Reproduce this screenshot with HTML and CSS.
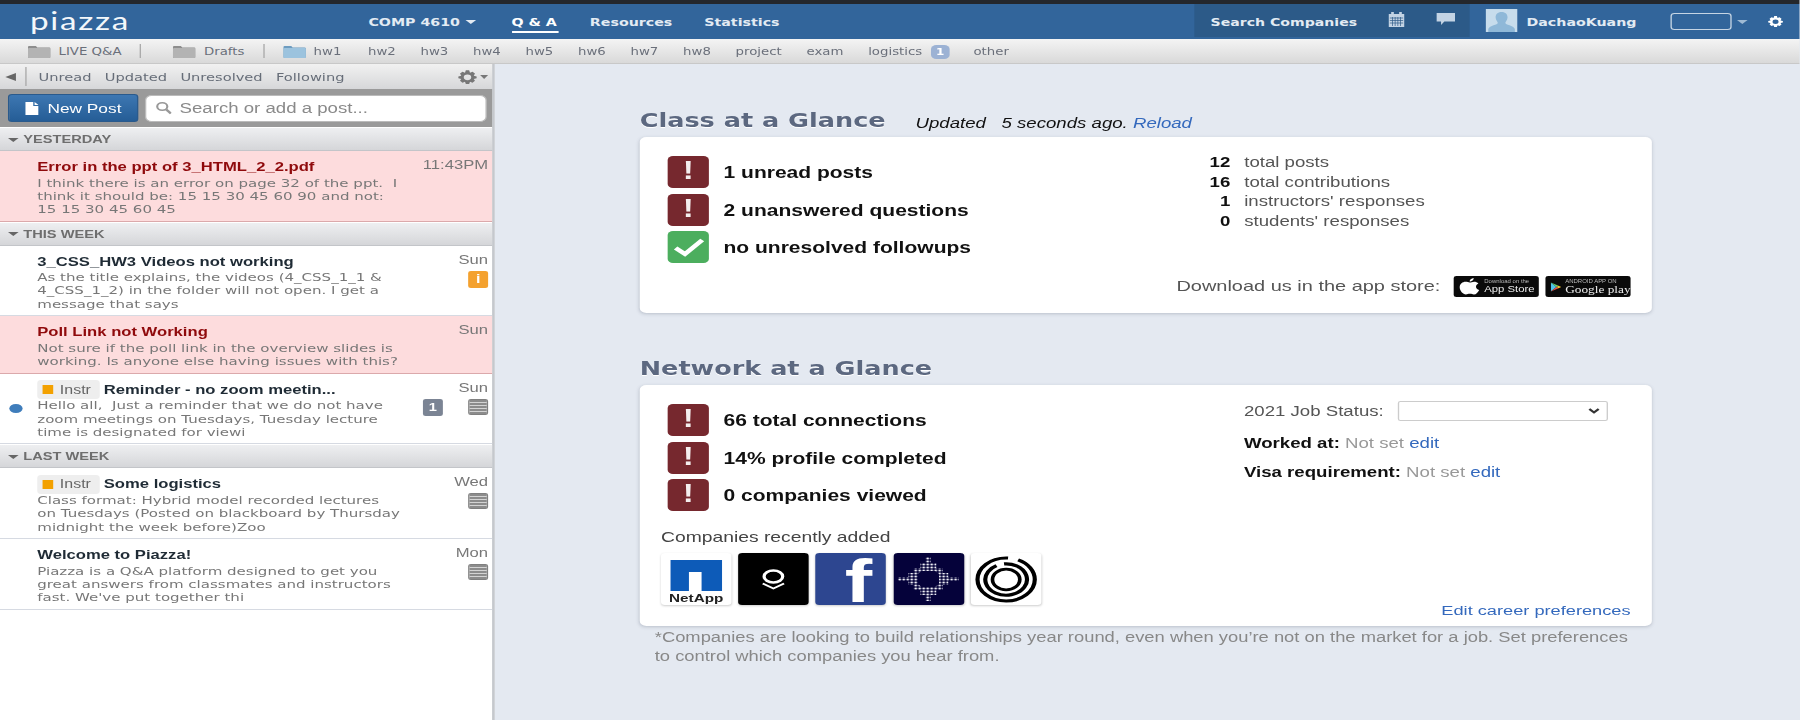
FILE: index.html
```html
<!DOCTYPE html>
<html lang="en">
<head>
    <meta charset="UTF-8">
    <title>Piazza - COMP 4610</title>
    <link rel="stylesheet" href="styles.css">
</head>
<body>
<div class="page">
    <div class="topline"></div>

    <header class="header">
        <div class="logo">piazza</div>
        <nav class="nav">
            <a class="course">COMP 4610<span class="caret"></span></a>
            <a class="active">Q &amp; A</a>
            <a class="res">Resources</a>
            <a class="stat">Statistics</a>
        </nav>
        <div class="header-right">
            <div class="search-co">
                <span>Search Companies</span>
                <svg class="cal" width="12" height="15" viewBox="0 0 12 15"><path fill="#c3d3e4" d="M0 2h2V0h2v2h4V0h2v2h2v13H0z"/><path stroke="#2c5a88" stroke-width=".6" d="M1 6h10M1 8.500h10M1 11h10M3 5v9M5 5v9M7 5v9M9 5v9"/></svg>
                <svg class="chat" width="14" height="12" viewBox="0 0 14 12"><path fill="#c3d3e4" d="M0 0h14v8.500H6L3.500 12V8.500H0z"/></svg>
            </div>
            <svg class="avatar" width="24" height="23" viewBox="0 0 24 23"><rect width="24" height="23" fill="#c7dcec"/><path fill="#8fb8d8" d="M12 3c3 0 4.500 2.400 4.500 5.200S14.800 13 14.800 14c0 1.600 6.200 2.600 7.200 6v3H2v-3c1-3.400 7.200-4.400 7.200-6 0-1-1.700-3-1.700-5.800S9 3 12 3z"/></svg>
            <span class="username">DachaoKuang</span>
            <span class="emptybox"></span>
            <span class="caret dim"></span>
            <svg class="cog" width="12" height="15" viewBox="0 0 24 24"><path fill="#fff" fill-rule="evenodd" d="M10 1h4l1 4 3-1.500 3 3L19.500 10l3.500 1v3l-3.500 1L21 18l-3 3-3-1.500-1 3.500h-4l-1-3.500L6 21l-3-3 1.500-3L1 14v-3l3.500-1L3 6.500l3-3L9 5zM12 8a4.500 4.500 0 1 0 0 9 4.500 4.500 0 0 0 0-9z"/></svg>
        </div>
    </header>

    <div class="subnav">
        <svg class="folder" width="17" height="14" viewBox="0 0 17 14"><path fill="#8d8d8d" d="M1 2h5l1 1.500h9a1 1 0 0 1 1 1V13a1 1 0 0 1-1 1H1a1 1 0 0 1-1-1V3a1 1 0 0 1 1-1z"/><rect y="4" width="17" height="10" rx="1" fill="#b3b3b3"/></svg>
        <span class="fname">LIVE Q&amp;A</span>
        <span class="divider"></span>
        <svg class="folder gap-a" width="17" height="14" viewBox="0 0 17 14"><path fill="#8d8d8d" d="M1 2h5l1 1.500h9a1 1 0 0 1 1 1V13a1 1 0 0 1-1 1H1a1 1 0 0 1-1-1V3a1 1 0 0 1 1-1z"/><rect y="4" width="17" height="10" rx="1" fill="#b3b3b3"/></svg>
        <span class="fname">Drafts</span>
        <span class="divider"></span>
        <svg class="folder gap-b" width="17" height="14" viewBox="0 0 17 14"><path fill="#6d9cc0" d="M1 2h5l1 1.500h9a1 1 0 0 1 1 1V13a1 1 0 0 1-1 1H1a1 1 0 0 1-1-1V3a1 1 0 0 1 1-1z"/><rect y="4" width="17" height="10" rx="1" fill="#9cc3de"/></svg>
        <span class="fname">hw1</span>
        <span class="tab first">hw2</span>
        <span class="tab">hw3</span>
        <span class="tab">hw4</span>
        <span class="tab">hw5</span>
        <span class="tab">hw6</span>
        <span class="tab">hw7</span>
        <span class="tab">hw8</span>
        <span class="tab">project</span>
        <span class="tab">exam</span>
        <span class="tab">logistics</span>
        <span class="tab-count">1</span>
        <span class="tab">other</span>
    </div>

    <div class="content">
        <aside class="sidebar">
            <div class="filters">
                <span class="arrow-left"></span>
                <span class="filter-sep"></span>
                <span class="filter first">Unread</span>
                <span class="filter">Updated</span>
                <span class="filter">Unresolved</span>
                <span class="filter">Following</span>
                <svg class="filter-gear" width="15" height="16" viewBox="0 0 24 24"><path fill="#777" fill-rule="evenodd" d="M10 1h4l1 4 3-1.500 3 3L19.500 10l3.500 1v3l-3.500 1L21 18l-3 3-3-1.500-1 3.500h-4l-1-3.500L6 21l-3-3 1.500-3L1 14v-3l3.500-1L3 6.500l3-3L9 5zM12 8a4.500 4.500 0 1 0 0 9 4.500 4.500 0 0 0 0-9z"/></svg>
                <span class="caret grey"></span>
            </div>

            <div class="searchband">
                <button class="btn-new">
                    <svg width="10" height="13" viewBox="0 0 10 13"><path fill="#fff" d="M0 0h6v4h4v9H0zM7 0l3 3H7z"/></svg>
                    New Post
                </button>
                <div class="post-search">
                    <svg width="12" height="14" viewBox="0 0 12 14"><circle cx="5" cy="5.500" r="3.800" fill="none" stroke="#999" stroke-width="1.600"/><path d="M8 8.500l3.500 4" stroke="#999" stroke-width="2"/></svg>
                    <span>Search or add a post...</span>
                </div>
            </div>

            <div class="section"><span class="tri"></span>YESTERDAY</div>
            <div class="post pink">
                <div class="gutter"></div>
                <div class="post-body">
                    <div class="post-title">Error in the ppt of 3_HTML_2_2.pdf</div>
                    <div class="post-text">I think there is an error on page 32 of the ppt.&nbsp; I<br>think it should be: 15 15 30 45 60 90 and not:<br>15 15 30 45 60 45</div>
                </div>
                <div class="post-meta"><span class="post-time">11:43PM</span></div>
            </div>

            <div class="section"><span class="tri"></span>THIS WEEK</div>
            <div class="post">
                <div class="gutter"></div>
                <div class="post-body">
                    <div class="post-title">3_CSS_HW3 Videos not working</div>
                    <div class="post-text">As the title explains, the videos (4_CSS_1_1 &amp;<br>4_CSS_1_2) in the folder will not open. I get a<br>message that says</div>
                </div>
                <div class="post-meta">
                    <span class="post-time">Sun</span>
                    <div class="meta-icons"><span class="info">i</span></div>
                </div>
            </div>
            <div class="post pink">
                <div class="gutter"></div>
                <div class="post-body">
                    <div class="post-title">Poll Link not Working</div>
                    <div class="post-text">Not sure if the poll link in the overview slides is<br>working. Is anyone else having issues with this?</div>
                </div>
                <div class="post-meta"><span class="post-time">Sun</span></div>
            </div>
            <div class="post">
                <div class="gutter"><span class="unread-dot"></span></div>
                <div class="post-body">
                    <div class="post-title"><span class="instr"><i></i>Instr</span>Reminder - no zoom meetin...</div>
                    <div class="post-text">Hello all,&nbsp; Just a reminder that we do not have<br>zoom meetings on Tuesdays, Tuesday lecture<br>time is designated for viewi</div>
                </div>
                <div class="post-meta">
                    <span class="post-time">Sun</span>
                    <div class="meta-icons">
                        <span class="count">1</span>
                        <span class="note"></span>
                    </div>
                </div>
            </div>

            <div class="section"><span class="tri"></span>LAST WEEK</div>
            <div class="post">
                <div class="gutter"></div>
                <div class="post-body">
                    <div class="post-title"><span class="instr"><i></i>Instr</span>Some logistics</div>
                    <div class="post-text">Class format: Hybrid model recorded lectures<br>on Tuesdays (Posted on blackboard by Thursday<br>midnight the week before)Zoo</div>
                </div>
                <div class="post-meta">
                    <span class="post-time">Wed</span>
                    <div class="meta-icons"><span class="note"></span></div>
                </div>
            </div>
            <div class="post">
                <div class="gutter"></div>
                <div class="post-body">
                    <div class="post-title">Welcome to Piazza!</div>
                    <div class="post-text">Piazza is a Q&amp;A platform designed to get you<br>great answers from classmates and instructors<br>fast. We've put together thi</div>
                </div>
                <div class="post-meta">
                    <span class="post-time">Mon</span>
                    <div class="meta-icons"><span class="note"></span></div>
                </div>
            </div>
        </aside>

        <main class="main">
            <div class="glance-head">
                <h2>Class at a Glance</h2>
                <span class="updated">Updated &nbsp;&nbsp;5 seconds ago. <a class="link">Reload</a></span>
            </div>
            <section class="card">
                <div class="card-cols">
                    <div class="checks">
                        <div class="check"><span class="alert">!</span>1 unread posts</div>
                        <div class="check"><span class="alert">!</span>2 unanswered questions</div>
                        <div class="check">
                            <span class="alert ok"><svg width="24" height="20" viewBox="0 0 24 20"><path d="M2 11l7 6L22 3" fill="none" stroke="#fff" stroke-width="4"/></svg></span>
                            no unresolved followups
                        </div>
                    </div>
                    <div class="stats">
                        <div><b>12</b>total posts</div>
                        <div><b>16</b>total contributions</div>
                        <div><b>1</b>instructors' responses</div>
                        <div><b>0</b>students' responses</div>
                    </div>
                </div>
                <div class="download">
                    <span>Download us in the app store:</span>
                    <div class="store">
                        <svg width="16" height="17" viewBox="0 0 16 17"><path fill="#fff" d="M11 0c.2 1.800-1.400 3.600-3 3.500C7.800 1.800 9.400.2 11 0zM8 4.500c1 0 2-.8 3.400-.8 1.200 0 2.400.6 3.200 1.700-2.700 1.600-2.300 5.400.6 6.500-.8 2-2.300 4.600-4 4.600-1.200 0-1.600-.7-3-.7s-1.900.7-3 .7C3 16.500.5 12.500.5 9.200c0-3.300 2.200-5.400 4.400-5.400 1.300 0 2.300.7 3.100.7z"/></svg>
                        <div class="store-text"><small>Download on the</small><span>App Store</span></div>
                    </div>
                    <div class="store">
                        <svg width="12" height="14" viewBox="0 0 12 14"><path fill="#4fc3e8" d="M0 0l6.500 7L0 14z"/><path fill="#63c96a" d="M0 0l9 5-2.500 2z"/><path fill="#e8524a" d="M0 14l9-5-2.500-2z"/><path fill="#f7c531" d="M9 5l3 2-3 2-2.500-2z"/></svg>
                        <div class="store-text google"><small>ANDROID APP ON</small><span>Google play</span></div>
                    </div>
                </div>
            </section>

            <div class="glance-head second">
                <h2>Network at a Glance</h2>
            </div>
            <section class="card network">
                <div class="net-left">
                    <div class="checks">
                        <div class="check"><span class="alert">!</span>66 total connections</div>
                        <div class="check"><span class="alert">!</span>14% profile completed</div>
                        <div class="check"><span class="alert">!</span>0 companies viewed</div>
                    </div>
                    <div class="recent-label">Companies recently added</div>
                    <div class="logos">
                        <div class="co netapp">
                            <svg width="39" height="31" viewBox="0 0 39 31"><path fill="#0d5bb8" d="M0 0h39v31H23.500V12H14v19H0z"/></svg>
                            <span>NetApp</span>
                        </div>
                        <div class="co black">
                            <svg width="19" height="21" viewBox="0 0 19 21"><ellipse cx="9.500" cy="7.500" rx="7" ry="6" fill="none" stroke="#fff" stroke-width="2.400"/><path d="M1.500 14.500l8 5 8-5" fill="none" stroke="#fff" stroke-width="1.800"/></svg>
                        </div>
                        <div class="co fb"><span>f</span></div>
                        <div class="co navy">
                            <svg width="46" height="44" viewBox="0 0 46 44">
                                <defs><pattern id="dots" width="3" height="3" patternUnits="userSpaceOnUse"><circle cx="1.500" cy="1.500" r="1.050" fill="#f0f1f8"/></pattern></defs>
                                <path fill="url(#dots)" fill-rule="evenodd" d="M21 0h4v6h4v5h5v5h4v4h8v4h-8v4h-4v5h-5v5h-4v6h-4v-6h-4v-5h-5v-5H8v-4H0v-4h8v-4h4v-5h5V6h4zM18 14l-3 3v10l3 3h10l3-3V17l-3-3z"/>
                            </svg>
                        </div>
                        <div class="co rings">
                            <svg width="47" height="47" viewBox="0 0 48 48" fill="none" stroke="#000" stroke-width="3.200">
                                <circle cx="24" cy="24" r="22" stroke-dasharray="105 8 25 0"/>
                                <circle cx="24" cy="24" r="16" stroke-dasharray="34 6 60 0" transform="rotate(120 24 24)"/>
                                <circle cx="24" cy="24" r="10.500" stroke-width="2.800"/>
                            </svg>
                        </div>
                    </div>
                </div>
                <div class="net-right">
                    <div class="job-status">
                        <span>2021 Job Status:</span>
                        <div class="fake-select">
                            <svg width="9" height="6" viewBox="0 0 9 6"><path d="M1 1l3.500 3.500L8 1" fill="none" stroke="#333" stroke-width="1.800"/></svg>
                        </div>
                    </div>
                    <div class="net-line"><b>Worked at:</b> <span class="notset">Not set</span> <a class="link">edit</a></div>
                    <div class="net-line"><b>Visa requirement:</b> <span class="notset">Not set</span> <a class="link">edit</a></div>
                    <a class="link edit-career">Edit career preferences</a>
                </div>
            </section>
            <p class="footnote">*Companies are looking to build relationships year round, even when you’re not on the market for a job. Set preferences<br>to control which companies you hear from.</p>
        </main>
    </div>
</div>
</body>
</html>
```

FILE: styles.css
```css
html, body {
    margin: 0;
    height: 100%;
    overflow: hidden;
    background: #e4e9f1;
}
/* the whole screen is wider than it is tall in the original capture */
.page {
    width: 1353.4px;
    height: 720px;
    transform: scaleX(1.33);
    transform-origin: 0 0;
    font-family: "Liberation Sans", Arial, sans-serif;
    display: flex;
    flex-direction: column;
}
.topline {
    height: 4px;
    background: #24272c;
}

/* header */
.header {
    height: 35px;
    background: #32659b;
    display: flex;
    align-items: center;
    color: #e3ebf3;
    font-family: "DejaVu Sans", sans-serif;
    font-weight: bold;
    font-size: 10.700px;
    flex: none;
}
.logo {
    width: 254.500px;
    padding-left: 22.500px;
    font-family: "Lato", sans-serif;
    font-size: 25px;
    font-weight: 400;
    letter-spacing: 1.300px;
    color: #f4f7fa;
    line-height: 30px;
    margin-top: -4px;
}
.nav {
    display: flex;
    align-items: center;
    margin-top: 1px;
}
.nav a {
    display: block;
}
.course {
    width: 107.500px;
}
.active {
    color: #fff;
    border-bottom: 2px solid #fff;
    padding-bottom: 2px;
    margin-top: 4px;
    width: 35px;
    white-space: nowrap;
}
.res {
    margin-left: 24px;
    width: 61px;
}
.stat {
    margin-left: 25px;
}
.caret {
    display: inline-block;
    margin-left: 4px;
    vertical-align: 2px;
    border-left: 4px solid transparent;
    border-right: 4px solid transparent;
    border-top: 4px solid #e3ebf3;
}
.caret.dim {
    border-top-color: #9fbad4;
    margin-left: 4px;
}
.caret.grey {
    border-top-color: #777;
    border-left-width: 3px;
    border-right-width: 3px;
    margin-left: 2px;
    vertical-align: 0;
}
.header-right {
    margin-left: auto;
    display: flex;
    align-items: center;
    height: 100%;
}
.search-co {
    width: 207px;
    box-sizing: border-box;
    height: 33px;
    margin-bottom: 2px;
    background: #2c5a88;
    padding-left: 12.500px;
    display: flex;
    align-items: center;
}
.search-co span {
    width: 134px;
    margin-top: 2px;
    font-size: 10.600px;
}
.cal {
    margin-top: -3px;
}
.chat {
    margin-left: 24px;
    margin-top: -4px;
}
.avatar {
    margin-left: 12px;
    margin-bottom: 3px;
}
.username {
    margin-left: 7px;
    margin-top: 1px;
    width: 108.700px;
}
.emptybox {
    width: 44px;
    height: 15px;
    border: 1px solid #c6d5e4;
    border-radius: 3px;
}
.cog {
    margin-left: 15px;
    margin-right: 12px;
}

/* folder bar */
.subnav {
    height: 24px;
    border-bottom: 1px solid #c8c8c8;
    background: linear-gradient(#f4f4f4, #d9d9d9);
    display: flex;
    align-items: center;
    padding-left: 21px;
    font-family: "DejaVu Sans", sans-serif;
    font-size: 10px;
    color: #6a6f7a;
    flex: none;
}
.subnav span:not(.divider) {
    margin-top: 1px;
}
.fname {
    margin-left: 6px;
}
.divider {
    width: 1px;
    height: 14px;
    background: #aaa;
    margin-left: 14px;
}
.gap-a {
    margin-left: 24px;
}
.gap-b {
    margin-left: 14px;
}
.tab {
    margin-left: 18.600px;
}
.tab.first {
    margin-left: 20px;
}
.tab-count {
    margin-left: 6.500px;
    margin-right: -13px;
    width: 14px;
    height: 14px;
    border-radius: 4px;
    background: #9cb2d4;
    color: #fff;
    font-weight: bold;
    font-size: 9px;
    text-align: center;
    line-height: 14px;
}
.tab-count + .tab {
    margin-left: 31px;
}

.content {
    flex: 1;
    display: flex;
    min-height: 0;
}

/* left list */
.sidebar {
    width: 370px;
    border-right: 2px solid #c5c8cd;
    background: #fff;
    flex: none;
}
.filters {
    height: 25px;
    background: linear-gradient(#f1f1f1, #d6d7d9);
    display: flex;
    align-items: center;
    font-family: "DejaVu Sans", sans-serif;
    font-size: 11px;
    color: #666d78;
}
.filter {
    margin-left: 10px;
    padding-top: 2px;
}
.filter.first {
    margin-left: 9px;
}
.arrow-left {
    margin-left: 4px;
    border-top: 4.500px solid transparent;
    border-bottom: 4.500px solid transparent;
    border-right: 8px solid #666;
}
.filter-sep {
    width: 1px;
    height: 19px;
    background: #aaa;
    margin-left: 7px;
}
.filter-gear {
    margin-left: auto;
}
.filters .caret {
    margin-right: 3px;
}
.searchband {
    height: 38px;
    background: #9a9a9a;
    display: flex;
    align-items: center;
    padding-left: 6px;
}
.btn-new {
    width: 98px;
    height: 28px;
    border: 1px solid #2a5a8c;
    border-radius: 3px;
    background: linear-gradient(#3d77b2, #255d96);
    color: #fff;
    font-family: "Liberation Sans", sans-serif;
    font-size: 13px;
    display: flex;
    align-items: center;
    justify-content: center;
    gap: 7px;
    padding: 0;
}
.post-search {
    width: 257px;
    height: 27px;
    box-sizing: border-box;
    margin-left: 5px;
    border-radius: 5px;
    border: 1px solid #bbb;
    background: #fff;
    display: flex;
    align-items: center;
    gap: 6px;
    padding-left: 7px;
    font-size: 14px;
    color: #8a8a8a;
}
.section {
    height: 23px;
    margin-top: 1px;
    border-bottom: 1px solid #c3c5c9;
    box-sizing: border-box;
    background: linear-gradient(#eeeff1, #d5d6d9);
    display: flex;
    align-items: center;
    font-size: 11px;
    font-weight: bold;
    color: #6e6e6e;
    padding-left: 5.500px;
}
.tri {
    border-left: 4px solid transparent;
    border-right: 4px solid transparent;
    border-top: 4px solid #666;
    margin-right: 4px;
    margin-top: 1px;
}
.post {
    display: flex;
    padding: 8px 3px 4.300px 0;
    border-bottom: 1px solid #d6dae2;
}
.post.pink {
    background: #fddcdd;
    border-bottom-color: #dba9ab;
}
.gutter {
    width: 28px;
    flex: none;
}
.unread-dot {
    display: block;
    width: 10px;
    height: 9px;
    border-radius: 50%;
    background: #3f7dbb;
    margin: 22px 0 0 7px;
}
.post-body {
    flex: 1;
    white-space: nowrap;
}
.post-title {
    height: 16px;
    line-height: 16px;
    font-size: 12.500px;
    font-weight: bold;
    color: #1f2b35;
    display: flex;
    align-items: center;
}
.pink .post-title {
    color: #8f0a0c;
}
.post-text {
    margin-top: 1.500px;
    font-family: "DejaVu Sans", sans-serif;
    font-size: 11.300px;
    line-height: 13.300px;
    color: #777;
}
.instr {
    display: inline-flex;
    align-items: center;
    height: 19px;
    width: 47px;
    box-sizing: border-box;
    flex: none;
    background: #eeeeee;
    border-radius: 3px;
    padding-left: 4px;
    margin-right: 3px;
    font-size: 12px;
    font-weight: normal;
    color: #666;
}
.instr i {
    width: 8px;
    height: 9px;
    background: #f3a100;
    margin-right: 5px;
}
.post-meta {
    display: flex;
    flex-direction: column;
    align-items: flex-end;
    margin-top: -1px;
}
.post-time {
    font-size: 12.500px;
    line-height: 14px;
    color: #777;
}
.meta-icons {
    display: flex;
    gap: 19px;
    margin-top: 4px;
}
.info, .count {
    width: 15px;
    height: 17px;
    border-radius: 2px;
    color: #fff;
    font-weight: bold;
    text-align: center;
    line-height: 17px;
    font-size: 12px;
}
.info {
    background: #f4a12e;
}
.count {
    background: #7b8494;
    font-size: 11px;
}
.note {
    width: 15px;
    height: 16px;
    box-sizing: border-box;
    border-radius: 2px;
    background: repeating-linear-gradient(#8c8c8c 0 2px, #d4d4d4 2px 3px);
    border: 1px solid #808080;
}

/* right side */
.main {
    flex: 1;
    padding: 44px 0 0 109px;
}
.glance-head {
    height: 29px;
    width: 761px;
    display: flex;
    align-items: center;
}
.glance-head.second {
    margin-top: 43px;
}
.glance-head h2 {
    margin: -5px 0 0;
    font-family: "DejaVu Sans", sans-serif;
    font-size: 19.200px;
    color: #5c6880;
    text-shadow: 0 1px 0 #fff;
}
.updated {
    margin-left: 22.500px;
    font-size: 14px;
    font-style: italic;
    color: #111;
}
.link {
    color: #3469bd;
}
.card {
    width: 761px;
    box-sizing: border-box;
    background: #fff;
    border-radius: 5px;
    box-shadow: 0 1px 3px rgba(90, 100, 120, .3);
    padding: 15px 16px 16px;
}
.card-cols {
    display: flex;
    justify-content: space-between;
}
.checks {
    margin: 4px 0 0 5px;
    display: flex;
    flex-direction: column;
    gap: 5.500px;
}
.check {
    display: flex;
    align-items: flex-start;
    height: 32px;
    line-height: 33px;
    font-size: 15.800px;
    font-weight: bold;
    color: #111;
}
.alert {
    width: 31px;
    height: 32px;
    border-radius: 4px;
    background: #76282e;
    color: #f4eeee;
    font-size: 25px;
    font-weight: bold;
    line-height: 28px;
    margin-right: 11px;
    display: flex;
    align-items: flex-start;
    justify-content: center;
}
.alert.ok {
    background: #4cae5e;
    align-items: center;
}
.stats {
    width: 328px;
    padding-top: 1px;
    font-size: 14px;
    line-height: 19.700px;
    color: #555;
}
.stats b {
    display: inline-block;
    width: 27px;
    margin-right: 10.500px;
    text-align: right;
    color: #111;
}
.download {
    display: flex;
    justify-content: flex-end;
    align-items: center;
    margin-top: 13px;
    gap: 5px;
    font-size: 15px;
    color: #555;
}
.download > span {
    margin: 0 5px 3px 0;
}
.store {
    width: 64px;
    height: 21px;
    border-radius: 2px;
    background: #0a0a0a;
    color: #eee;
    display: flex;
    align-items: center;
    gap: 3px;
    padding-left: 4px;
    box-sizing: border-box;
}
.store-text {
    display: flex;
    flex-direction: column;
    font-size: 8.500px;
    line-height: 9px;
    white-space: nowrap;
}
.store-text small {
    font-size: 4.500px;
    line-height: 6px;
    color: #bbb;
}
.store-text.google {
    font-family: "Liberation Serif", serif;
    font-size: 10px;
}
.store-text.google small {
    font-family: "Liberation Sans", sans-serif;
}
.network {
    display: flex;
    justify-content: space-between;
    height: 241px;
    padding-bottom: 7px;
}
.recent-label {
    margin-top: 17px;
    font-size: 14.500px;
    line-height: 18px;
    color: #444;
}
.logos {
    display: flex;
    gap: 5.200px;
    margin-top: 7px;
}
.co {
    width: 53px;
    height: 52px;
    border-radius: 3px;
    display: flex;
    align-items: center;
    justify-content: center;
    box-shadow: 0 1px 2px rgba(0, 0, 0, .2);
}
.netapp {
    flex-direction: column;
    background: #fff;
    justify-content: flex-start;
    padding-top: 7px;
    box-sizing: border-box;
}
.netapp span {
    margin-top: 1px;
    font-size: 11.500px;
    font-weight: bold;
    line-height: 13px;
    color: #222;
}
.black {
    background: #000;
}
.fb {
    background: #2d4690;
    align-items: flex-end;
    justify-content: flex-end;
}
.fb span {
    font-size: 62px;
    font-weight: bold;
    color: #fff;
    line-height: 48px;
    margin: 0 10.500px 0 0;
}
.navy {
    background: #05023a;
}
.rings {
    background: #fff;
}
.net-right {
    width: 290.700px;
    display: flex;
    flex-direction: column;
    font-size: 14px;
    color: #555;
    padding-top: 1px;
}
.job-status {
    display: flex;
    align-items: center;
    gap: 11px;
}
.fake-select {
    width: 158px;
    height: 20px;
    box-sizing: border-box;
    border: 1px solid #ccc;
    border-radius: 2px;
    display: flex;
    align-items: center;
    justify-content: flex-end;
    padding-right: 5px;
}
.net-line {
    margin-top: 13px;
    line-height: 16px;
    color: #111;
}
.job-status + .net-line {
    margin-top: 14px;
}
.notset {
    color: #999;
}
.edit-career {
    margin-top: auto;
    align-self: flex-end;
    line-height: 16px;
    font-size: 13.700px;
}
.footnote {
    margin: 2px 0 0 11.300px;
    font-size: 13.800px;
    line-height: 19px;
    color: #888;
    white-space: nowrap;
}
```
